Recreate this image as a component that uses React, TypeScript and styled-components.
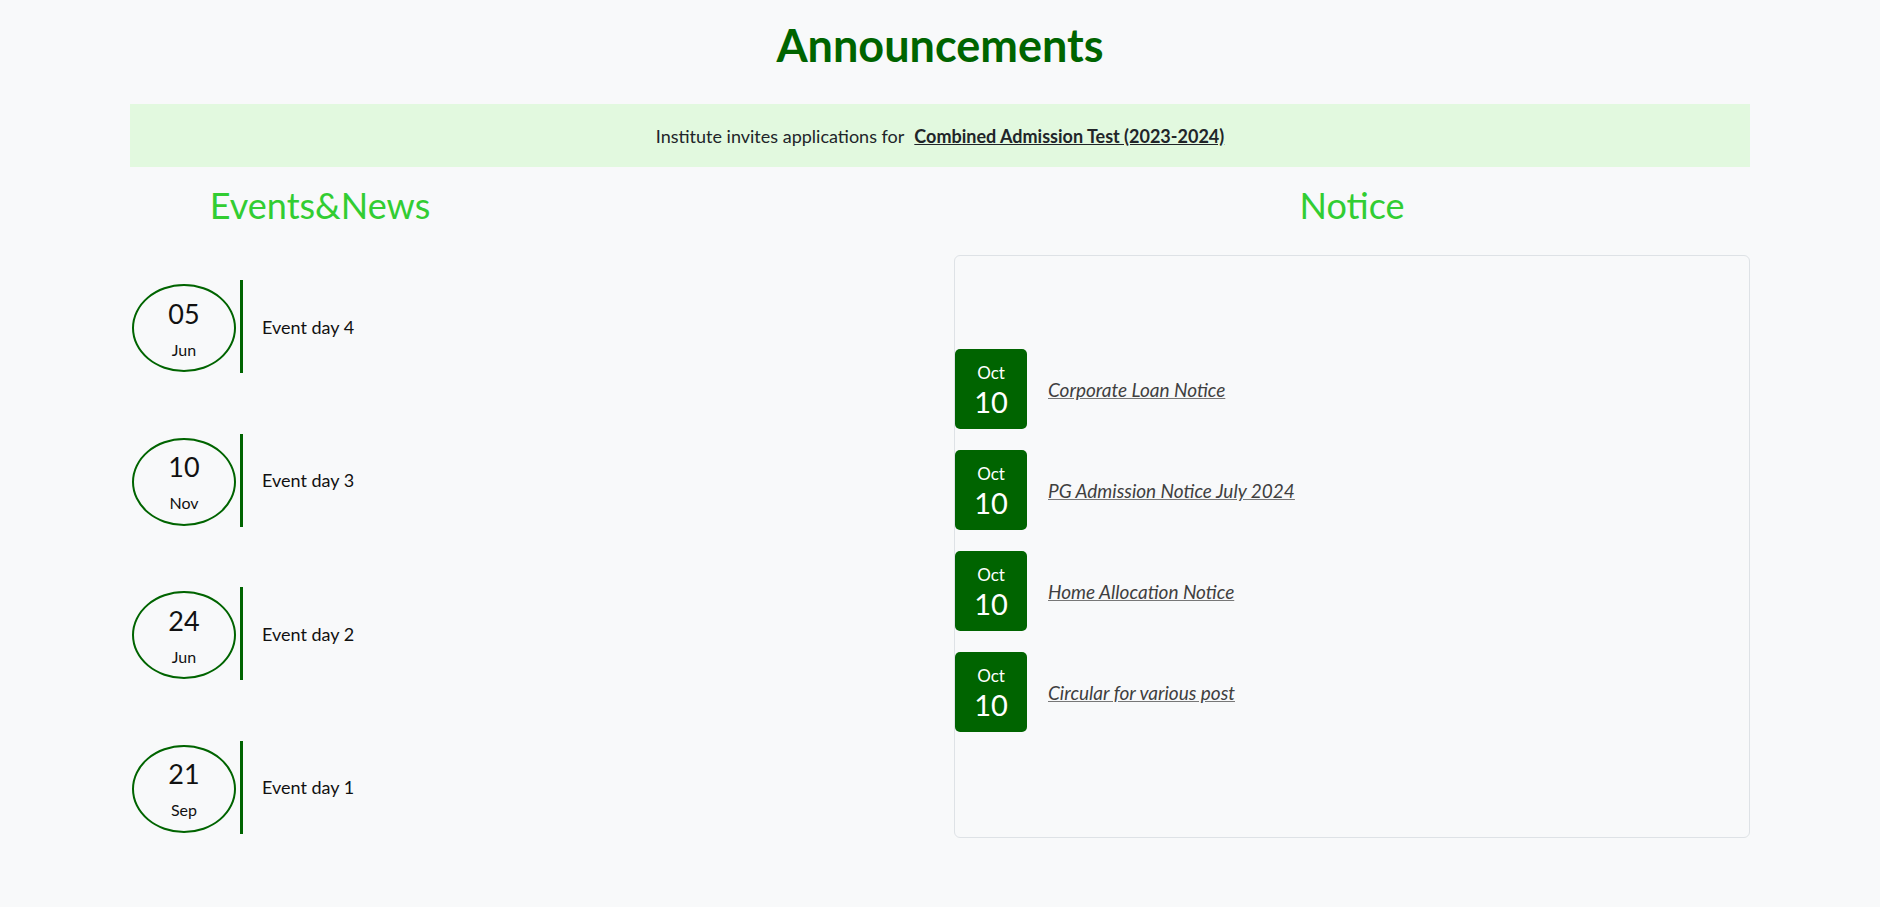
import styled, { createGlobalStyle } from 'styled-components'

const GlobalStyle = createGlobalStyle`
  body {
    margin: 0;
    background: #f8f9fa;
    font-family: Lato, "Noto Sans", sans-serif;
    color: #212529;
  }
`

const events = [
  { day: '05', month: 'Jun', title: 'Event day 4' },
  { day: '10', month: 'Nov', title: 'Event day 3' },
  { day: '24', month: 'Jun', title: 'Event day 2' },
  { day: '21', month: 'Sep', title: 'Event day 1' },
]

const notices = [
  'Corporate Loan Notice',
  'PG Admission Notice July 2024',
  'Home Allocation Notice',
  'Circular for various post',
]

const Page = styled.div`
  max-width: 1620px;
  margin: 0 auto;
  padding-bottom: 60px;
`

const Title = styled.h1`
  margin: 18px 0 0;
  text-align: center;
  color: #006400;
  font-size: 45px;
  font-weight: 700;
  line-height: 1.2;
`

const Banner = styled.div`
  margin-top: 32px;
  height: 63px;
  background: #e2f9df;
  display: flex;
  align-items: center;
  justify-content: center;
  font-size: 18px;
  color: #212529;

  a {
    margin-left: 10px;
    font-weight: 700;
    color: #212529;
    text-decoration: underline;
  }
`

const Columns = styled.div`
  display: grid;
  grid-template-columns: 1fr 796px;
  column-gap: 14px;
`

const Heading = styled.h2<{ $width?: string }>`
  margin: 17px 0 0;
  width: ${({ $width }) => $width || 'auto'};
  text-align: center;
  color: #32cd32;
  font-size: 36px;
  font-weight: 400;
  line-height: 1.2;
`

const EventList = styled.div`
  margin-top: 53px;
  display: flex;
  flex-direction: column;
  gap: 60.5px;
`

const EventRow = styled.div`
  display: flex;
  align-items: center;
  height: 93px;
  padding-left: 2px;
`

const DateCircle = styled.div`
  width: 100px;
  height: 84px;
  border: 2px solid #006400;
  border-radius: 50%;
  display: flex;
  flex-direction: column;
  align-items: center;
  justify-content: center;
  color: #111;
  margin-top: 3px;
`

const Day = styled.div`
  font-size: 27px;
  line-height: 34px;
`

const Month = styled.div`
  font-size: 16px;
  line-height: 20px;
  margin-top: 9px;
`

const Divider = styled.div`
  width: 3px;
  align-self: stretch;
  background: #006400;
  margin-left: 4px;
`

const EventTitle = styled.span`
  margin-left: 19px;
  font-size: 18px;
  color: #111;
`

const NoticeBox = styled.div`
  margin-top: 28px;
  border: 1px solid #dee2e6;
  border-radius: 6px;
  padding: 93px 0 105px;
  display: flex;
  flex-direction: column;
  gap: 21px;
`

const NoticeRow = styled.div`
  display: flex;
  align-items: center;
`

const Badge = styled.div`
  width: 72px;
  height: 80px;
  box-sizing: border-box;
  padding-top: 14px;
  border-radius: 5px;
  background: #006400;
  color: #fff;
  display: flex;
  flex-direction: column;
  align-items: center;
`

const BadgeMonth = styled.div`
  font-size: 17px;
  line-height: 20px;
`

const BadgeDay = styled.div`
  font-size: 29px;
  line-height: 34px;
  margin-top: 2px;
`

const NoticeLink = styled.a`
  margin-left: 21px;
  font-size: 19px;
  font-style: italic;
  color: #3f3f3f;
  text-decoration: underline;
  text-decoration-color: #777;
`

const App = () => {
  return (
    <>
      <GlobalStyle />
      <Page>
        <Title>Announcements</Title>
        <Banner>
          Institute invites applications for <a href="#">Combined Admission Test (2023-2024)</a>
        </Banner>
        <Columns>
          <div>
            <Heading $width="380px">Events&amp;News</Heading>
            <EventList>
              {events.map((e, i) => (
                <EventRow key={i}>
                  <DateCircle>
                    <Day>{e.day}</Day>
                    <Month>{e.month}</Month>
                  </DateCircle>
                  <Divider />
                  <EventTitle>{e.title}</EventTitle>
                </EventRow>
              ))}
            </EventList>
          </div>
          <div>
            <Heading>Notice</Heading>
            <NoticeBox>
              {notices.map((n, i) => (
                <NoticeRow key={i}>
                  <Badge>
                    <BadgeMonth>Oct</BadgeMonth>
                    <BadgeDay>10</BadgeDay>
                  </Badge>
                  <NoticeLink href="#">{n}</NoticeLink>
                </NoticeRow>
              ))}
            </NoticeBox>
          </div>
        </Columns>
      </Page>
    </>
  )
}

export default App
